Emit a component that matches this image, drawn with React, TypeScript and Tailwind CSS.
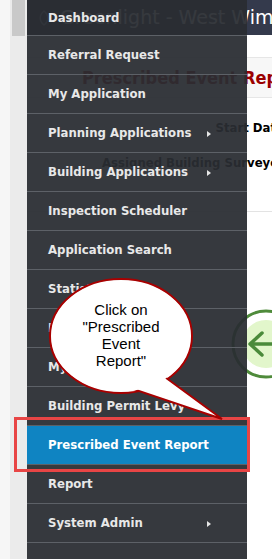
import React from 'react';

type MenuItem = {
  label: string;
  sub?: boolean;
  active?: boolean;
};

const items: MenuItem[] = [
  { label: 'Referral Request' },
  { label: 'My Application' },
  { label: 'Planning Applications', sub: true },
  { label: 'Building Applications', sub: true },
  { label: 'Inspection Scheduler' },
  { label: 'Application Search' },
  { label: 'Statistics' },
  { label: 'Invoices' },
  { label: 'My Tasks' },
  { label: 'Building Permit Levy' },
  { label: 'Prescribed Event Report', active: true },
  { label: 'Report' },
  { label: 'System Admin', sub: true },
  { label: '' },
];

const Caret = () => (
  <span className="ml-auto mr-[36px] mt-[2px] h-0 w-0 border-y-[3.5px] border-l-[4px] border-y-transparent border-l-[#e6e6e6]" />
);

const Menu = () => (
  <div className="absolute left-[27px] top-0 w-[220px] bg-[rgba(41,45,50,0.94)] font-['DejaVu_Sans_Condensed','DejaVu_Sans',sans-serif] text-[13px] font-bold text-[#e8e8e8]">
    <div className="flex h-[35px] items-center pl-[21px]">Dashboard</div>
    {items.map((item, i) => (
      <div
        key={i}
        className={
          'flex h-[39px] items-center border-t border-[#5d6167] pl-[21px] ' +
          (item.active ? 'bg-[#0f84c2] text-white' : '')
        }
      >
        <span className="whitespace-nowrap">{item.label}</span>
        {item.sub && <Caret />}
      </div>
    ))}
  </div>
);

const Callout = () => (
  <>
    <svg className="pointer-events-none absolute left-0 top-0" width="272" height="559" viewBox="0 0 272 559">
      <ellipse cx="121" cy="336" rx="71" ry="57" fill="#fff" stroke="#a80000" strokeWidth="2" />
      <polygon points="158,372 222,419 124,386" fill="#fff" stroke="#a80000" strokeWidth="2" />
      <ellipse cx="121" cy="336" rx="69.5" ry="55.5" fill="#fff" />
    </svg>
    <div className="absolute left-[50px] top-[301px] w-[142px] text-center font-['Liberation_Sans',Arial,sans-serif] text-[15px] leading-[17px] text-black">
      Click on
      <br />
      "Prescribed
      <br />
      Event
      <br />
      Report"
    </div>
  </>
);

export default function App() {
  return (
    <div className="relative flex h-[559px] w-[272px] overflow-hidden bg-white">
      <div className="w-[10px] shrink-0 bg-[#f6f6f6]" />
      <div className="w-[17px] shrink-0 bg-[#ebebeb] pl-[2px]">
        <div className="h-[36px] w-[13px] bg-[#c9c9c9]" />
      </div>

      <div className="min-w-0 flex-1 font-['DejaVu_Sans_Condensed','DejaVu_Sans',sans-serif]">
        <div className="flex h-[35px] w-[330px] items-center bg-[#343a4c] pl-[10px]">
          <svg width="14" height="16" viewBox="0 0 14 16">
            <path d="M7 1 C2 5 2 11 7 15 C12 11 12 5 7 1 Z" fill="none" stroke="#9aa3b5" strokeWidth="1.5" />
          </svg>
          <span className="ml-[9px] whitespace-nowrap font-['DejaVu_Sans',sans-serif] text-[19px] text-white">
            Greenlight - West Wimmera
          </span>
        </div>
        <div className="h-[22px]" />
        <div className="flex h-[41px] w-[330px] items-center border-y border-[#e6e6e6] bg-[#f7f7f7] pl-[55px]">
          <span className="whitespace-nowrap text-[18px] font-bold text-[#9b0000]">Prescribed Event Report</span>
        </div>
        <div className="w-[257px] pt-[22px] text-right text-[13px] font-bold leading-[16px] text-black">
          <div className="whitespace-nowrap">Start Date</div>
          <div className="mt-[19px] whitespace-nowrap">Assigned Building Surveyor</div>
        </div>
        <div className="mt-[40px] h-px w-[330px] bg-[#e3e3e3]" />
        <div className="ml-[203px] mt-[96px]">
          <svg width="72" height="72" viewBox="0 0 72 72">
            <circle cx="36" cy="36" r="33" fill="none" stroke="#4f8b3b" strokeWidth="3" />
            <circle cx="36" cy="36" r="24" fill="#e2f6cb" />
            <path d="M20 36 H45 M32 25 L20 36 L32 47" fill="none" stroke="#4a8a3a" strokeWidth="3.5" strokeLinecap="round" strokeLinejoin="round" />
          </svg>
        </div>
      </div>

      <Menu />
      <div className="absolute left-[14px] top-[417px] h-[55px] w-[236px] border-[3px] border-[#e84545]" />
      <Callout />
    </div>
  );
}
